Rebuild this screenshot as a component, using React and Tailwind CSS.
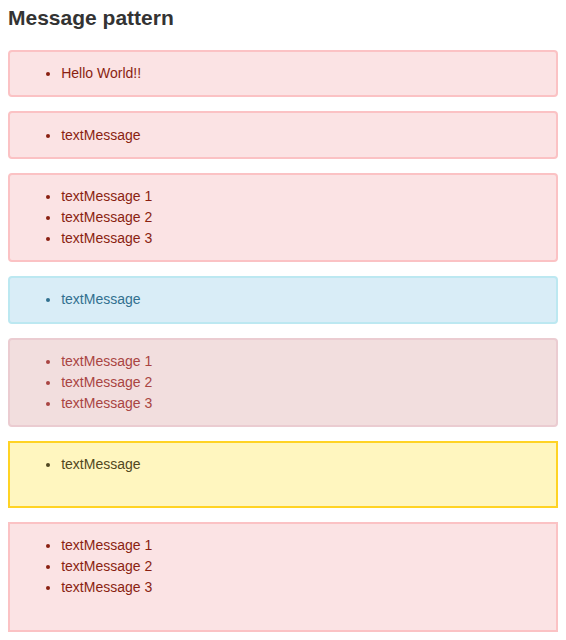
import React from 'react';

const variants = {
    error: 'bg-[#fbe3e4] border-[#fbc2c4] text-[#8a1f11] rounded-[4px]',
    info: 'bg-[#d9edf7] border-[#bce8f1] text-[#31708f] rounded-[4px]',
    danger: 'bg-[#f2dede] border-[#ebccd1] text-[#a94442] rounded-[4px]',
    notice: 'bg-[#fff6bf] border-[#ffd324] text-[#514721]',
    errorFlat: 'bg-[#fbe3e4] border-[#fbc2c4] text-[#8a1f11]',
};

const MessageBox = ({ variant, items, spaced }) => (
    <div className={`border-2 p-[11.2px] mb-[14px] ${variants[variant]}`}>
        <ul className={`list-disc pl-[40px] ${spaced ? 'mb-[20px]' : ''}`}>
            {items.map((item) => (
                <li key={item}>{item}</li>
            ))}
        </ul>
    </div>
);

const three = ['textMessage 1', 'textMessage 2', 'textMessage 3'];

export default function App() {
    return (
        <div className="px-2 bg-white min-h-screen font-['Liberation_Sans',Arial,sans-serif] text-[14px] leading-[21px]">
            <h2 className="pt-[6px] mb-[20px] text-[21px] leading-[24px] font-bold text-[#333]">Message pattern</h2>
            <MessageBox variant="error" items={['Hello World!!']} />
            <MessageBox variant="error" items={['textMessage']} />
            <MessageBox variant="error" items={three} />
            <MessageBox variant="info" items={['textMessage']} />
            <MessageBox variant="danger" items={three} />
            <MessageBox variant="notice" items={['textMessage']} spaced />
            <MessageBox variant="errorFlat" items={three} spaced />
        </div>
    );
}
